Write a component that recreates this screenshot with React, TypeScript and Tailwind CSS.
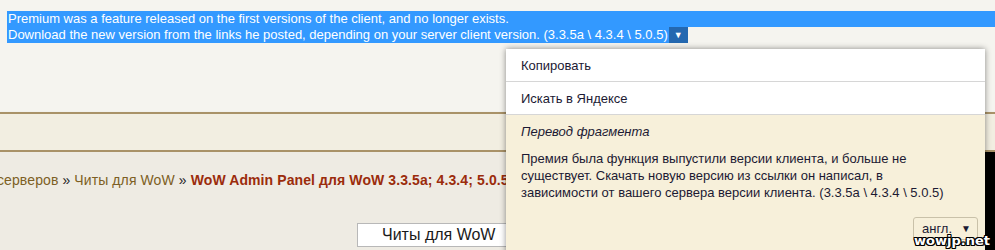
import React from "react";

export default function App() {
  return (
    <div
      className="relative w-[995px] h-[250px] overflow-hidden bg-[#f5f4ef]"
      style={{ fontFamily: '"Liberation Sans", Arial, sans-serif' }}
    >
      {/* top area with selected text */}
      <div className="h-[112px] pt-[11px] pl-[7px] text-[13px] leading-[16px] text-white">
        <div className="bg-[#3399ff] pl-[1px]">
          Premium was a feature released on the first versions of the client, and no longer exists.
        </div>
        <div className="flex">
          <span className="bg-[#3399ff] pl-[1px] pr-[1px]">
            Download the new version from the links he posted, depending on your server client version. (3.3.5a \ 4.3.4 \ 5.0.5)
          </span>
          <span className="flex w-[19px] items-center justify-center bg-[#2468b0] text-[9px]">▼</span>
        </div>
      </div>

      {/* band */}
      <div className="h-[40px] border-y-2 border-[#a99268] bg-[#f2eee1] shadow-[0_2px_3px_rgba(0,0,0,0.25)]" />

      {/* lower area */}
      <div className="flex h-[98px]">
        <div className="relative flex-1 bg-[#eeebe3]">
          <div className="pt-[19px] -ml-[3px] whitespace-nowrap text-[14px] leading-[18px] tracking-[0.1px]">
            <span className="text-[#7d5f24]">серверов</span>
            <span className="text-[#222]"> » </span>
            <span className="text-[#7d5f24]">Читы для WoW</span>
            <span className="text-[#222]"> » </span>
            <span className="font-bold text-[#9b2c0c]">WoW Admin Panel для WoW 3.3.5a; 4.3.4; 5.0.5</span>
          </div>
          <div className="mt-[34px] ml-[357px] flex h-[24px] w-[200px] items-center border border-[#b8b8b8] bg-white pl-[24px] text-[16px] text-[#1a1a1a]">
            Читы для WoW
          </div>
        </div>
        <div className="w-[10px] bg-black" />
      </div>

      {/* context menu popup */}
      <div className="absolute left-[506px] top-[49px] w-[479px] h-[220px] bg-white shadow-[0_0_6px_rgba(0,0,0,0.45)] text-[13px] text-[#1c1a33]">
        <div className="h-[33px] border-b border-[#d6d6d6] pl-[15px] pt-[9px] leading-[16px]">Копировать</div>
        <div className="h-[33px] border-b border-[#d6d6d6] pl-[15px] pt-[9px] leading-[16px]">Искать в Яндексе</div>
        <div className="h-[154px] bg-[#f7f0da] pl-[15px] pr-[15px] pt-[9px]">
          <div className="italic leading-[16px]">Перевод фрагмента</div>
          <div className="mt-[10px] w-[430px] leading-[17px]">
            Премия была функция выпустили версии клиента, и больше не существует. Скачать новую версию из ссылки он написал, в зависимости от вашего сервера версии клиента. (3.3.5a \ 4.3.4 \ 5.0.5)
          </div>
          <div className="mt-[16px] ml-[392px] flex h-[23px] w-[65px] items-center justify-between rounded-[3px] border border-[#c9c1a9] pl-[8px] pr-[6px]">
            <span>англ.</span>
            <span className="text-[10px]">▼</span>
          </div>
        </div>
      </div>

      {/* watermark */}
      <div
        className="absolute right-[5px] bottom-[2px] text-[13px] font-bold leading-[15px] text-white"
        style={{
          fontFamily: '"DejaVu Sans", sans-serif',
          textShadow:
            "1px 0 0 #000, -1px 0 0 #000, 0 1px 0 #000, 0 -1px 0 #000, 1px 1px 0 #000, -1px -1px 0 #000, 1px -1px 0 #000, -1px 1px 0 #000",
        }}
      >
        wowjp.net
      </div>
    </div>
  );
}
